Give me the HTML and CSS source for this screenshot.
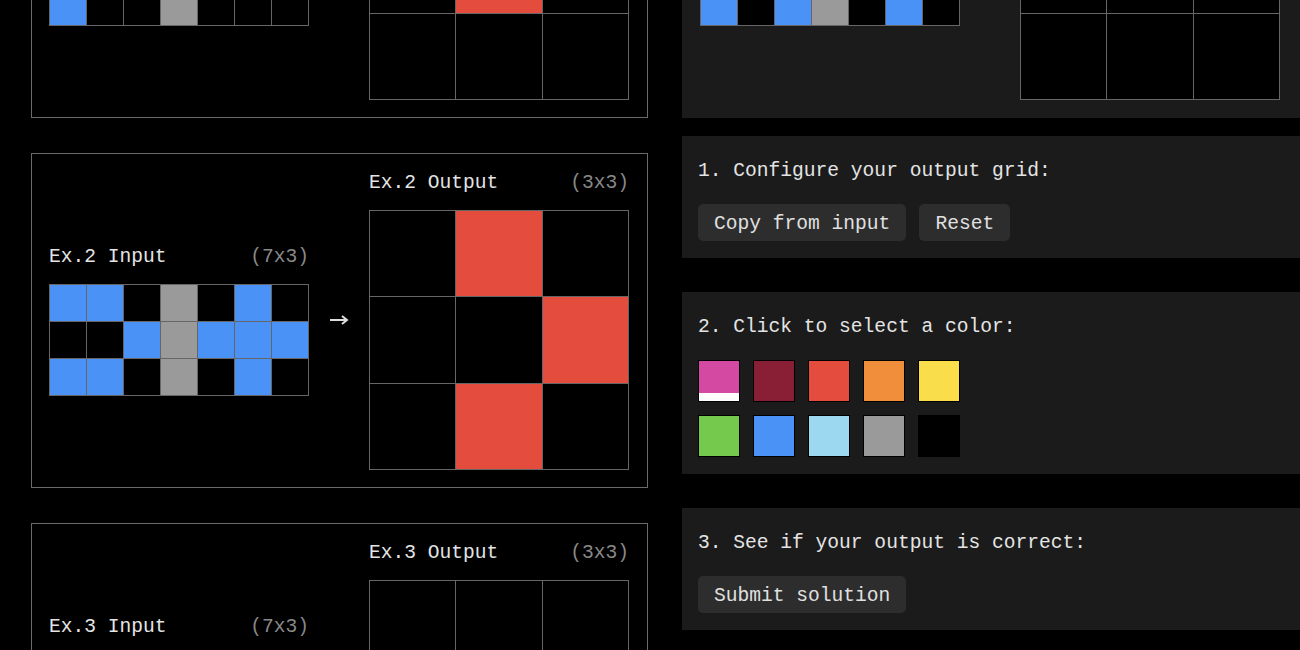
FILE: index.html
```html
<!DOCTYPE html>
<html lang="en">
<head>
  <meta charset="UTF-8" />
  <title>ARC Puzzle</title>
  <link rel="stylesheet" href="styles.css">
</head>
<body>
  <div class="page">
    <div class="examples">
      <div class="pair">
        <div class="side">
          <div class="label"><span>Ex.1 Input</span><span class="size">(7x3)</span></div>
          <div class="grid wide" data-rows="1005010,0105111,1005000"></div>
        </div>
        <div class="arrow"><svg width="20" height="12" viewBox="0 0 20 12"><path d="M1 6H18M13 2L18 6L13 10" fill="none" stroke="#ddd" stroke-width="2"/></svg></div>
        <div class="side">
          <div class="label"><span>Ex.1 Output</span><span class="size">(3x3)</span></div>
          <div class="grid square" data-rows="000,020,000"></div>
        </div>
      </div>

      <div class="pair">
        <div class="side">
          <div class="label"><span>Ex.2 Input</span><span class="size">(7x3)</span></div>
          <div class="grid wide" data-rows="1105010,0015111,1105010"></div>
        </div>
        <div class="arrow"><svg width="20" height="12" viewBox="0 0 20 12"><path d="M1 6H18M13 2L18 6L13 10" fill="none" stroke="#ddd" stroke-width="2"/></svg></div>
        <div class="side">
          <div class="label"><span>Ex.2 Output</span><span class="size">(3x3)</span></div>
          <div class="grid square" data-rows="020,002,020"></div>
        </div>
      </div>

      <div class="pair">
        <div class="side">
          <div class="label"><span>Ex.3 Input</span><span class="size">(7x3)</span></div>
          <div class="grid wide" data-rows="0015000,1105101,0115101"></div>
        </div>
        <div class="arrow"><svg width="20" height="12" viewBox="0 0 20 12"><path d="M1 6H18M13 2L18 6L13 10" fill="none" stroke="#ddd" stroke-width="2"/></svg></div>
        <div class="side">
          <div class="label"><span>Ex.3 Output</span><span class="size">(3x3)</span></div>
          <div class="grid square" data-rows="000,200,002"></div>
        </div>
      </div>
    </div>

    <div class="controls">
      <div class="test">
        <div class="side">
          <div class="label"><span>Test Input</span><span class="size">(7x3)</span></div>
          <div class="grid wide" data-rows="1015101,0105101,1015010"></div>
        </div>
        <div class="arrow"></div>
        <div class="side">
          <div class="label"><span>Your Output</span><span class="size">(3x3)</span></div>
          <div class="grid square" data-rows="000,000,000"></div>
        </div>
      </div>

      <div class="panel">
        <div class="step">1. Configure your output grid:</div>
        <div class="buttons">
          <button class="btn">Copy from input</button>
          <button class="btn">Reset</button>
        </div>
      </div>

      <div class="panel">
        <div class="step">2. Click to select a color:</div>
        <div class="swatches">
          <div class="swatch c6 selected"></div>
          <div class="swatch c9"></div>
          <div class="swatch c2"></div>
          <div class="swatch c7"></div>
          <div class="swatch c4"></div>
          <div class="swatch c3"></div>
          <div class="swatch c1"></div>
          <div class="swatch c8"></div>
          <div class="swatch c5"></div>
          <div class="swatch c0"></div>
        </div>
      </div>

      <div class="panel">
        <div class="step">3. See if your output is correct:</div>
        <div class="buttons">
          <button class="btn">Submit solution</button>
        </div>
      </div>
    </div>
  </div>

  <script>
    // fill every grid from its row strings, one digit per cell
    document.querySelectorAll('.grid').forEach(function (grid) {
      grid.dataset.rows.split(',').forEach(function (row) {
        for (let i = 0; i < row.length; i++) {
          const cell = document.createElement('div');
          cell.className = 'cell c' + row[i];
          grid.appendChild(cell);
        }
      });
    });
  </script>
</body>
</html>
```

FILE: styles.css
```css
body { margin: 0; background: #000; color: #e4e4e4; font-family: "Liberation Mono", "DejaVu Sans Mono", monospace; font-size: 19.6px; }
.page { display: flex; gap: 34px; padding-left: 31px; margin-top: -217px; }

/* example pairs */
.examples { width: 617px; flex: none; display: flex; flex-direction: column; gap: 35px; }
.pair { display: flex; align-items: center; border: 1px solid #6a6a6a; padding: 16px 18px 17px 17px; }
.side { width: 260px; flex: none; }
.label { display: flex; justify-content: space-between; height: 22px; line-height: 26px; margin-bottom: 18px; white-space: nowrap; }
.size { color: #888; }
.arrow { width: 60px; flex: none; display: flex; justify-content: center; }

.grid { display: grid; gap: 1px; padding: 1px; background: #666; box-sizing: border-box; width: 260px; }
.grid.wide { grid-template-columns: repeat(7, 1fr); grid-template-rows: repeat(3, 36px); }
.grid.square { grid-template-columns: repeat(3, 1fr); grid-template-rows: repeat(3, 1fr); height: 260px; }

/* palette */
.c0 { background: #000; }
.c1 { background: #4a92f6; }
.c2 { background: #e44d3d; }
.c3 { background: #75c94c; }
.c4 { background: #f9dd4b; }
.c5 { background: #9a9a9a; }
.c6 { background: #d44aa2; }
.c7 { background: #f08e3c; }
.c8 { background: #9dd8f1; }
.c9 { background: #891f35; }

/* right column */
.controls { width: 618px; flex: none; display: flex; flex-direction: column; }
.test { display: flex; align-items: center; background: #1b1b1b; padding: 17px 19px 18px 18px; margin-bottom: 18px; }
.panel { background: #1b1b1b; padding: 16px 16px 17px; margin-bottom: 34px; }
.step { height: 34px; line-height: 38px; margin-bottom: 18px; white-space: nowrap; }
.buttons { display: flex; gap: 13px; }
.btn { height: 37px; padding: 2px 16px 0; background: #2d2d2d; border: none; border-radius: 5px; color: #e0e0e0; font: inherit; cursor: pointer; }

.swatches { display: grid; grid-template-columns: repeat(5, 42px); grid-auto-rows: 42px; gap: 13px; }
.swatch { box-sizing: border-box; border: 1px solid #000; cursor: pointer; }
.swatch.selected { box-shadow: inset 0 -8px 0 #fff; }
```
